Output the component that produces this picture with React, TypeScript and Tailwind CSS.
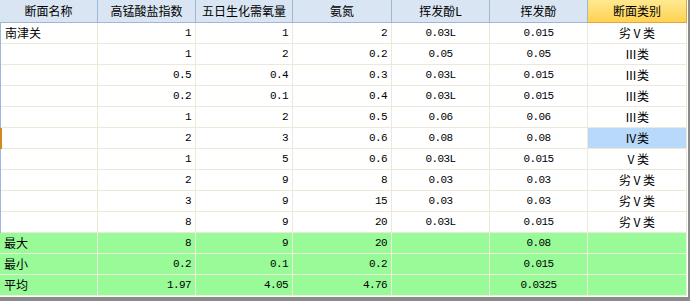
import React from 'react';

type Row = string[];

const headers = ['断面名称', '高锰酸盐指数', '五日生化需氧量', '氨氮', '挥发酚L', '挥发酚', '断面类别'];

const rows: Row[] = [
  ['南津关', '1', '1', '2', '0.03L', '0.015', '劣Ⅴ类'],
  ['', '1', '2', '0.2', '0.05', '0.05', 'Ⅲ类'],
  ['', '0.5', '0.4', '0.3', '0.03L', '0.015', 'Ⅲ类'],
  ['', '0.2', '0.1', '0.4', '0.03L', '0.015', 'Ⅲ类'],
  ['', '1', '2', '0.5', '0.06', '0.06', 'Ⅲ类'],
  ['', '2', '3', '0.6', '0.08', '0.08', 'Ⅳ类'],
  ['', '1', '5', '0.6', '0.03L', '0.015', 'Ⅴ类'],
  ['', '2', '9', '8', '0.03', '0.03', '劣Ⅴ类'],
  ['', '3', '9', '15', '0.03', '0.03', '劣Ⅴ类'],
  ['', '8', '9', '20', '0.03L', '0.015', '劣Ⅴ类'],
];

const summary: Row[] = [
  ['最大', '8', '9', '20', '', '0.08', ''],
  ['最小', '0.2', '0.1', '0.2', '', '0.015', ''],
  ['平均', '1.97', '4.05', '4.76', '', '0.0325', ''],
];

const grid = 'grid grid-cols-[98px_98px_97px_99px_98px_98px_99px]';
const cjk = "font-['Noto_Sans_CJK_SC',sans-serif] text-[12px]";
const num = "font-['Liberation_Mono',monospace] text-[11px] tracking-[-0.6px]";

const SELECTED_ROW = 5;

function Cell({ value, col, green, selected }: { value: string; col: number; green?: boolean; selected?: boolean }) {
  const align = col === 0 ? 'justify-start pl-[4px]' : col < 4 ? 'justify-end pr-[4px]' : 'justify-center';
  const font = col === 0 || col === 6 ? cjk : num;
  const bg = selected ? 'bg-[#b9d9fb]' : green ? 'bg-[#98fb98]' : 'bg-white';
  const border = green ? 'border-[#eeeedc]' : 'border-[#ece9d8]';
  return (
    <div className={`flex h-[21px] items-center border-r border-b ${border} ${bg} ${align} ${font} text-black leading-none`}>
      {value}
    </div>
  );
}

export default function App() {
  return (
    <div className="w-[690px] h-[301px] bg-[#8a8a8a] overflow-hidden">
      <div className="w-[688px] h-[297px] bg-white overflow-hidden">
        <div className={grid}>
          {headers.map((h, i) => (
            <div
              key={h}
              className={`flex h-[23px] items-center justify-center border-b border-r ${cjk} text-black ${
                i === 6
                  ? 'bg-gradient-to-b from-[#ffe98f] to-[#ffd24f] border-[#e2a640]'
                  : 'bg-[#d9e5f3] border-[#9fb7d1]'
              }`}
            >
              {h}
            </div>
          ))}
        </div>

        {rows.map((r, ri) => (
          <div
            key={ri}
            className={`${grid} ${ri === SELECTED_ROW ? 'shadow-[inset_2px_0_#d08a1c]' : ''}`}
          >
            {r.map((v, ci) => (
              <div
                key={ci}
                className={ci === 0 ? (ri === SELECTED_ROW ? 'border-l-2 border-[#d08a1c]' : 'border-l border-[#9db9d9]') : ''}
              >
                <Cell value={v} col={ci} selected={ri === SELECTED_ROW && ci === 6} />
              </div>
            ))}
          </div>
        ))}

        {summary.map((r, ri) => (
          <div key={`s${ri}`} className={grid}>
            {r.map((v, ci) => (
              <Cell key={ci} value={v} col={ci} green />
            ))}
          </div>
        ))}
      </div>
    </div>
  );
}
